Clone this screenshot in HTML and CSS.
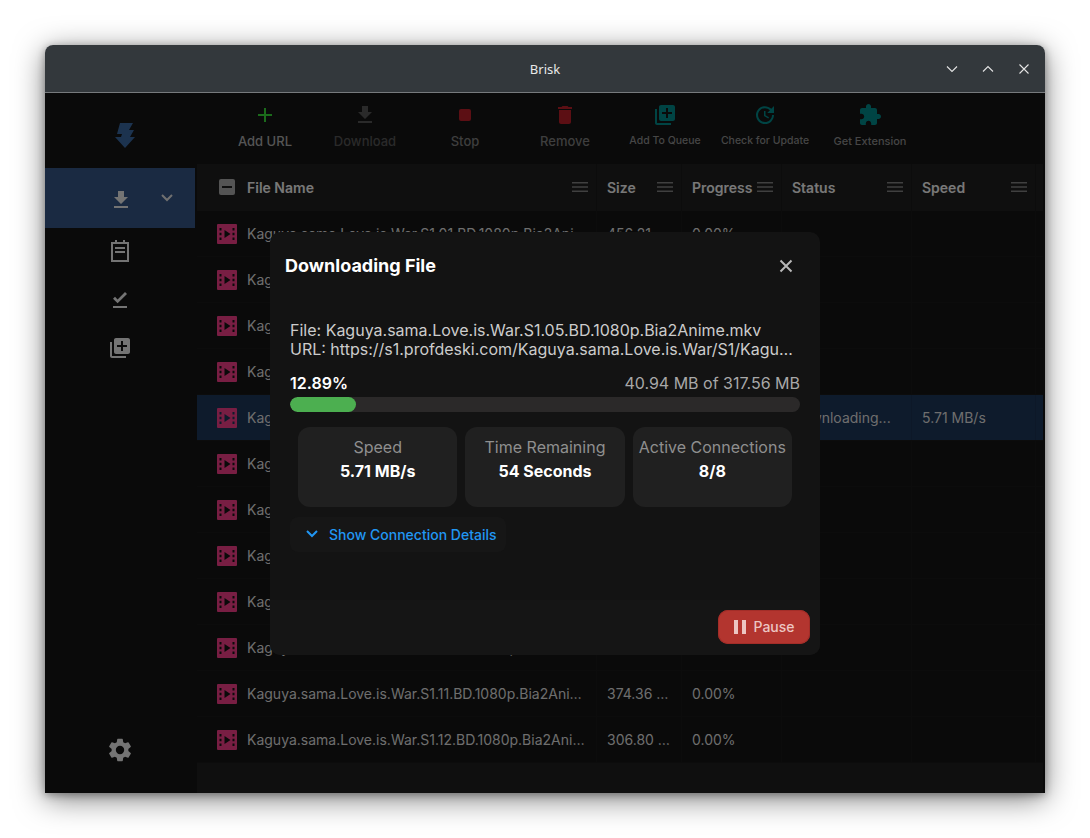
FILE: index.html

```html
<!DOCTYPE html>
<html lang="en">
<head>
    <meta charset="UTF-8">
    <meta name="viewport" content="width=device-width, initial-scale=1.0">
    <title>Brisk</title>
    <link rel="stylesheet" href="styles.css">
</head>
<body>
    <svg class="defs" width="0" height="0">
        <symbol id="i-download" viewBox="0 0 24 24"><path d="M19 9h-4V3H9v6H5l7 7 7-7zM5 18v2h14v-2H5z"/></symbol>
        <symbol id="i-queue" viewBox="0 0 24 24"><path d="M4 6H2v14c0 1.1.9 2 2 2h14v-2H4V6zm16-4H8c-1.1 0-2 .9-2 2v12c0 1.1.9 2 2 2h12c1.1 0 2-.9 2-2V4c0-1.1-.9-2-2-2zm-1 9h-4v4h-2v-4H9V9h4V5h2v4h4v2z"/></symbol>
        <symbol id="i-film" viewBox="0 0 20 20"><path fill-rule="evenodd" d="M1 0h18a1 1 0 0 1 1 1v18a1 1 0 0 1-1 1H1a1 1 0 0 1-1-1V1a1 1 0 0 1 1-1zM2.500 4v2.500h2V4zm0 4.800v2.400h2V8.800zm0 4.700V16h2v-2.500zM15.500 4v2.500h2V4zm0 4.800v2.400h2V8.800zm0 4.700V16h2v-2.500zM7.500 6v8l6-4z"/></symbol>
        <symbol id="i-menu" viewBox="0 0 16 10"><path d="M0 0h16v1.600H0zM0 4.200h16v1.600H0zM0 8.400h16V10H0z"/></symbol>
    </svg>

    <div class="window">
        <div class="titlebar">
            <span class="titlebar-name">Brisk</span>
            <div class="titlebar-btns">
                <svg viewBox="0 0 12 12"><path d="M1 3.500l5 5 5-5"/></svg>
                <svg viewBox="0 0 12 12"><path d="M1 8.500l5-5 5 5"/></svg>
                <svg viewBox="0 0 12 12"><path d="M1.500 1.500l9 9M10.500 1.500l-9 9"/></svg>
            </div>
        </div>

        <div class="content">
            <div class="sidebar">
                <div class="logo">
                    <svg viewBox="0 0 20 25"><path d="M5 0h13l-4 7h5l-4 7h5l-10 11L0 14h6l1-3H2z"/></svg>
                </div>
                <div class="side-item active">
                    <svg class="side-icon"><use href="#i-download"/></svg>
                    <svg class="side-chevron" viewBox="0 0 12 8"><path d="M1 1l5 5 5-5"/></svg>
                </div>
                <div class="side-item">
                    <svg class="side-icon" viewBox="0 0 24 24"><path fill-rule="evenodd" d="M3 2h18v20H3zM5 4v16h14V4zM7 0h2v2H7zM15 0h2v2h-2zM7 7h10v2H7zM7 11h10v2H7z"/></svg>
                </div>
                <div class="side-item">
                    <svg class="side-icon" viewBox="0 0 24 24"><path d="M5 18h14v2H5v-2zm4.600-2.700L5 10.700l2-1.900 2.600 2.600L17 4l2 2-9.400 9.300z"/></svg>
                </div>
                <div class="side-item">
                    <svg class="side-icon"><use href="#i-queue"/></svg>
                </div>
                <div class="side-item settings">
                    <svg class="gear" viewBox="0 0 24 24"><path d="M19.140 12.940c.04-.3.060-.61.060-.94 0-.32-.02-.64-.07-.94l2.030-1.580a.49.490 0 0 0 .12-.61l-1.920-3.320a.49.490 0 0 0-.59-.22l-2.390.96c-.5-.38-1.030-.7-1.620-.94l-.36-2.540a.48.480 0 0 0-.48-.41h-3.840a.47.470 0 0 0-.47.410l-.36 2.540c-.59.240-1.130.57-1.620.94l-2.390-.96a.48.480 0 0 0-.59.220L2.740 8.870a.47.470 0 0 0 .12.61l2.030 1.580c-.05.3-.09.63-.09.94s.02.640.07.94l-2.030 1.580a.49.490 0 0 0-.12.610l1.920 3.320c.12.220.37.290.59.220l2.390-.96c.5.380 1.030.7 1.620.94l.36 2.540c.05.240.24.410.48.410h3.840c.24 0 .44-.17.47-.41l.36-2.540c.59-.24 1.130-.56 1.620-.94l2.390.96c.22.080.47 0 .59-.22l1.920-3.320a.47.470 0 0 0-.12-.61l-2.010-1.580zM12 15.600A3.610 3.610 0 0 1 8.400 12 3.610 3.610 0 0 1 12 8.400a3.610 3.610 0 0 1 3.600 3.600 3.610 3.610 0 0 1-3.600 3.600z"/></svg>
                </div>
            </div>

            <div class="main">
                <div class="toolbar">
                    <div class="tool">
                        <svg class="tool-icon green" viewBox="0 0 24 24"><path d="M19 13h-6v6h-2v-6H5v-2h6V5h2v6h6v2z"/></svg>
                        <span>Add URL</span>
                    </div>
                    <div class="tool off">
                        <svg class="tool-icon grey"><use href="#i-download"/></svg>
                        <span>Download</span>
                    </div>
                    <div class="tool dim">
                        <svg class="tool-icon red" viewBox="0 0 24 24"><rect x="6" y="6" width="12" height="12" rx="2"/></svg>
                        <span>Stop</span>
                    </div>
                    <div class="tool dim">
                        <svg class="tool-icon red" viewBox="0 0 24 24"><path d="M6 19c0 1.100.9 2 2 2h8c1.100 0 2-.9 2-2V7H6v12zM19 4h-3.500l-1-1h-5l-1 1H5v2h14V4z"/></svg>
                        <span>Remove</span>
                    </div>
                    <div class="tool small">
                        <svg class="tool-icon teal"><use href="#i-queue"/></svg>
                        <span>Add To Queue</span>
                    </div>
                    <div class="tool small">
                        <svg class="tool-icon teal" viewBox="0 0 24 24"><path d="M21 10.120h-6.780l2.740-2.820c-2.730-2.700-7.150-2.800-9.880-.1-2.730 2.710-2.730 7.080 0 9.790s7.150 2.710 9.880 0C18.320 15.650 19 14.080 19 12.100h2c0 1.980-.88 4.550-2.640 6.290-3.510 3.480-9.210 3.480-12.720 0-3.500-3.470-3.530-9.110-.02-12.580s9.140-3.470 12.650 0L21 3v7.120zM12.500 8v4.250l3.500 2.080-.72 1.210L11 13V8h1.500z"/></svg>
                        <span>Check for Update</span>
                    </div>
                    <div class="tool small wide">
                        <svg class="tool-icon teal" viewBox="0 0 24 24"><path d="M20.500 11H19V7c0-1.100-.9-2-2-2h-4V3.500C13 2.120 11.880 1 10.500 1S8 2.120 8 3.500V5H4c-1.100 0-1.990.9-1.990 2v3.800H3.500c1.490 0 2.700 1.210 2.700 2.700s-1.210 2.700-2.700 2.700H2V20c0 1.100.9 2 2 2h3.800v-1.500c0-1.490 1.210-2.700 2.700-2.700 1.490 0 2.700 1.210 2.700 2.700V22H17c1.100 0 2-.9 2-2v-4h1.500c1.380 0 2.500-1.120 2.500-2.500S21.880 11 20.500 11z"/></svg>
                        <span>Get Extension</span>
                    </div>
                </div>

                <div class="grid">
                    <div class="row head">
                        <div class="cell first"><span class="check"></span><span class="head-name">File Name</span><svg class="menu"><use href="#i-menu"/></svg></div>
                        <div class="cell"><span class="head-name">Size</span><svg class="menu"><use href="#i-menu"/></svg></div>
                        <div class="cell"><span class="head-name">Progress</span><svg class="menu"><use href="#i-menu"/></svg></div>
                        <div class="cell"><span class="head-name">Status</span><svg class="menu"><use href="#i-menu"/></svg></div>
                        <div class="cell"><span class="head-name">Speed</span><svg class="menu"><use href="#i-menu"/></svg></div>
                    </div>
                    <div class="row"><div class="cell first"><svg class="film"><use href="#i-film"/></svg><span class="name">Kaguya.sama.Love.is.War.S1.01.BD.1080p.Bia2Anime.mkv</span></div><div class="cell"><span class="name">456.21 MB</span></div><div class="cell">0.00%</div><div class="cell"></div><div class="cell"></div></div>
                    <div class="row"><div class="cell first"><svg class="film"><use href="#i-film"/></svg><span class="name">Kaguya.sama.Love.is.War.S1.02.BD.1080p.Bia2Anime.mkv</span></div><div class="cell"><span class="name">312.40 MB</span></div><div class="cell">0.00%</div><div class="cell"></div><div class="cell"></div></div>
                    <div class="row"><div class="cell first"><svg class="film"><use href="#i-film"/></svg><span class="name">Kaguya.sama.Love.is.War.S1.03.BD.1080p.Bia2Anime.mkv</span></div><div class="cell"><span class="name">340.12 MB</span></div><div class="cell">0.00%</div><div class="cell"></div><div class="cell"></div></div>
                    <div class="row"><div class="cell first"><svg class="film"><use href="#i-film"/></svg><span class="name">Kaguya.sama.Love.is.War.S1.04.BD.1080p.Bia2Anime.mkv</span></div><div class="cell"><span class="name">298.77 MB</span></div><div class="cell">0.00%</div><div class="cell"></div><div class="cell"></div></div>
                    <div class="row selected"><div class="cell first"><svg class="film"><use href="#i-film"/></svg><span class="name">Kaguya.sama.Love.is.War.S1.05.BD.1080p.Bia2Anime.mkv</span></div><div class="cell"><span class="name">317.56 MB</span></div><div class="cell">12.89%</div><div class="cell"><span class="name">Downloading...</span></div><div class="cell">5.71 MB/s</div></div>
                    <div class="row"><div class="cell first"><svg class="film"><use href="#i-film"/></svg><span class="name">Kaguya.sama.Love.is.War.S1.06.BD.1080p.Bia2Anime.mkv</span></div><div class="cell"><span class="name">325.09 MB</span></div><div class="cell">0.00%</div><div class="cell"></div><div class="cell"></div></div>
                    <div class="row"><div class="cell first"><svg class="film"><use href="#i-film"/></svg><span class="name">Kaguya.sama.Love.is.War.S1.07.BD.1080p.Bia2Anime.mkv</span></div><div class="cell"><span class="name">301.33 MB</span></div><div class="cell">0.00%</div><div class="cell"></div><div class="cell"></div></div>
                    <div class="row"><div class="cell first"><svg class="film"><use href="#i-film"/></svg><span class="name">Kaguya.sama.Love.is.War.S1.08.BD.1080p.Bia2Anime.mkv</span></div><div class="cell"><span class="name">288.64 MB</span></div><div class="cell">0.00%</div><div class="cell"></div><div class="cell"></div></div>
                    <div class="row"><div class="cell first"><svg class="film"><use href="#i-film"/></svg><span class="name">Kaguya.sama.Love.is.War.S1.09.BD.1080p.Bia2Anime.mkv</span></div><div class="cell"><span class="name">350.18 MB</span></div><div class="cell">0.00%</div><div class="cell"></div><div class="cell"></div></div>
                    <div class="row"><div class="cell first"><svg class="film"><use href="#i-film"/></svg><span class="name">Kaguya.sama.Love.is.War.S1.10.BD.1080p.Bia2Anime.mkv</span></div><div class="cell"><span class="name">333.50 MB</span></div><div class="cell">0.00%</div><div class="cell"></div><div class="cell"></div></div>
                    <div class="row"><div class="cell first"><svg class="film"><use href="#i-film"/></svg><span class="name">Kaguya.sama.Love.is.War.S1.11.BD.1080p.Bia2Anime.mkv</span></div><div class="cell"><span class="name">374.36 MB</span></div><div class="cell">0.00%</div><div class="cell"></div><div class="cell"></div></div>
                    <div class="row"><div class="cell first"><svg class="film"><use href="#i-film"/></svg><span class="name">Kaguya.sama.Love.is.War.S1.12.BD.1080p.Bia2Anime.mkv</span></div><div class="cell"><span class="name">306.80 MB</span></div><div class="cell">0.00%</div><div class="cell"></div><div class="cell"></div></div>
                </div>
            </div>

            <div class="overlay">
                <div class="modal">
                    <div class="modal-head">
                        <span class="modal-title">Downloading File</span>
                        <svg class="modal-close" viewBox="0 0 14 14"><path d="M1.500 1.500l11 11M12.500 1.500l-11 11"/></svg>
                    </div>
                    <div class="modal-body">
                        <div class="file-info">
                            <div class="file-line">File: Kaguya.sama.Love.is.War.S1.05.BD.1080p.Bia2Anime.mkv</div>
                            <div class="file-line">URL: https://s1.profdeski.com/Kaguya.sama.Love.is.War/S1/Kaguya.sama.Love.is.War.S1.05.BD.1080p.Bia2Anime.mkv</div>
                        </div>
                        <div class="progress-text">
                            <span class="percent">12.89%</span>
                            <span class="amount">40.94 MB of 317.56 MB</span>
                        </div>
                        <div class="bar"><div class="bar-fill" style="width: 12.89%"></div></div>
                        <div class="stats">
                            <div class="stat"><span class="stat-label">Speed</span><span class="stat-value">5.71 MB/s</span></div>
                            <div class="stat"><span class="stat-label">Time Remaining</span><span class="stat-value">54 Seconds</span></div>
                            <div class="stat"><span class="stat-label">Active Connections</span><span class="stat-value">8/8</span></div>
                        </div>
                        <button class="details-btn">
                            <svg viewBox="0 0 12 8"><path d="M1 1l5 5 5-5"/></svg>
                            Show Connection Details
                        </button>
                    </div>
                    <div class="modal-foot">
                        <button class="pause-btn">
                            <svg viewBox="0 0 14 14"><path d="M1 0h4v14H1zM9 0h4v14H9z"/></svg>
                            Pause
                        </button>
                    </div>
                </div>
            </div>
        </div>
    </div>
</body>
</html>
```

FILE: styles.css

```css
* {
    box-sizing: border-box;
}
body {
    font-family: Inter, "Liberation Sans", sans-serif;
    margin: 0;
    padding: 45px;
    background-color: #ffffff;
}
button {
    font-family: inherit;
    border: none;
    cursor: pointer;
}
.defs {
    display: block;
    height: 0;
}
.window {
    width: 1000px;
    height: 748px;
    display: flex;
    flex-direction: column;
    border-radius: 8px 8px 0 0;
    overflow: hidden;
    box-shadow: 0 6px 30px rgba(0, 0, 0, 0.5), 0 2px 8px rgba(0, 0, 0, 0.35);
}

/* title bar */
.titlebar {
    height: 48px;
    flex-shrink: 0;
    display: flex;
    align-items: center;
    justify-content: flex-end;
    padding-right: 15px;
    background-color: #33383c;
    border-bottom: 1px solid #777a7d;
    position: relative;
}
.titlebar-name {
    position: absolute;
    left: 0;
    right: 0;
    text-align: center;
    font-family: "Noto Sans", sans-serif;
    font-size: 13px;
    color: #e8e8e8;
}
.titlebar-btns {
    display: flex;
    gap: 24px;
}
.titlebar-btns svg {
    width: 12px;
    height: 12px;
    fill: none;
    stroke: #e4e4e4;
    stroke-width: 1.1;
}

.content {
    flex: 1;
    display: flex;
    position: relative;
    min-height: 0;
    background-color: #141414;
}

/* sidebar */
.sidebar {
    width: 150px;
    flex-shrink: 0;
    display: flex;
    flex-direction: column;
}
.logo {
    height: 75px;
    display: flex;
    align-items: center;
    justify-content: center;
    padding: 10px 0 0 10px;
}
.logo svg {
    width: 20px;
    height: 25px;
    fill: #38669f;
}
.side-item {
    height: 48px;
    display: flex;
    align-items: center;
    padding-left: 63px;
    gap: 23px;
}
.side-item.active {
    height: 60px;
    background-color: #345484;
    padding-left: 64px;
    gap: 25px;
}
.side-item.active .side-icon {
    margin-top: 3px;
}
.side-item.settings {
    margin-top: auto;
    margin-bottom: 19px;
    padding-left: 61px;
}
.side-icon {
    width: 24px;
    height: 24px;
    fill: #e8e8e8;
}
.gear {
    width: 28px;
    height: 28px;
    fill: #e8e8e8;
}
.side-chevron {
    width: 12px;
    height: 8px;
    margin-left: 3px;
    fill: none;
    stroke: #e0e0e0;
    stroke-width: 2;
}

/* toolbar */
.main {
    flex: 1;
    min-width: 0;
    display: flex;
    flex-direction: column;
}
.toolbar {
    height: 71px;
    flex-shrink: 0;
    display: flex;
    padding-left: 20px;
}
.tool {
    width: 100px;
    display: flex;
    flex-direction: column;
    align-items: center;
    padding-top: 10px;
    gap: 6px;
    font-size: 13px;
    font-weight: 500;
    color: #aaaaaa;
}
.tool.dim {
    color: #7c7c7c;
}
.tool.off {
    color: #555555;
}
.tool.small {
    font-size: 10.500px;
    color: #8c8c8c;
}
.tool.wide {
    width: 110px;
    font-size: 11px;
    gap: 6px;
}
.tool span {
    line-height: 16px;
}
.tool-icon {
    width: 24px;
    height: 24px;
}
.green { fill: #36d636; }
.grey { fill: #555555; }
.red { fill: #b81e28; }
.teal { fill: #008888; }

/* file table */
.grid {
    flex: 1;
    margin: 0 2px;
    background-color: #1e1e1e;
    display: flex;
    flex-direction: column;
}
.row {
    height: 46px;
    flex-shrink: 0;
    display: grid;
    grid-template-columns: 400px 85px 100px 130px 124px;
    background-color: #141414;
    border-bottom: 1px solid #191919;
    font-size: 14px;
    color: #dcdcdc;
}
.row.head {
    height: 47px;
    background-color: #1e1e1e;
    border-bottom: none;
}
.row.selected {
    background-color: #1c3658;
}
.cell {
    display: flex;
    align-items: center;
    padding: 0 8px 0 10px;
    min-width: 0;
    border-right: 1px solid #191919;
}
.selected .cell {
    border-right-color: #1a3150;
}
.cell.first {
    padding-left: 20px;
    gap: 10px;
}
.head .cell {
    justify-content: space-between;
    padding-bottom: 1px;
}
.head .first {
    justify-content: flex-start;
}
.head .menu {
    margin-left: auto;
}
.head-name {
    font-weight: 600;
    color: #f0f0f0;
}
.check {
    width: 16px;
    height: 16px;
    margin: 0 2px;
    border-radius: 2px;
    background: linear-gradient(#1e1e1e, #1e1e1e) center / 10px 2px no-repeat #a8a8a8;
}
.menu {
    width: 16px;
    height: 10px;
    flex-shrink: 0;
    fill: #808080;
}
.film {
    width: 20px;
    height: 20px;
    flex-shrink: 0;
    fill: #f03c86;
}
.name {
    white-space: nowrap;
    overflow: hidden;
    text-overflow: ellipsis;
}

/* dialog */
.overlay {
    position: absolute;
    inset: 0;
    display: flex;
    align-items: center;
    justify-content: center;
    background-color: rgba(0, 0, 0, 0.5);
}
.modal {
    width: 550px;
    height: 423px;
    display: flex;
    flex-direction: column;
    border-radius: 10px;
    background-color: #131313;
}
.modal-head {
    height: 66px;
    flex-shrink: 0;
    display: flex;
    align-items: center;
    justify-content: space-between;
    padding: 2px 27px 0 15px;
}
.modal-title {
    font-size: 18px;
    font-weight: 700;
    color: #ffffff;
}
.modal-close {
    width: 14px;
    height: 14px;
    fill: none;
    stroke: #b8b8b8;
    stroke-width: 2;
}
.modal-body {
    flex: 1;
    min-height: 0;
    padding: 23px 20px 0;
}
.file-line {
    font-size: 16px;
    line-height: 19px;
    color: #cccccc;
    white-space: nowrap;
    overflow: hidden;
    text-overflow: ellipsis;
}
.progress-text {
    display: flex;
    justify-content: space-between;
    margin-top: 15px;
    font-size: 16px;
    line-height: 19px;
}
.percent {
    font-weight: 600;
    color: #ffffff;
}
.amount {
    color: #a8a8a8;
}
.bar {
    height: 15px;
    margin-top: 4px;
    border-radius: 8px;
    background-color: #2b2929;
    overflow: hidden;
}
.bar-fill {
    height: 100%;
    border-radius: 8px;
    background-color: #4caf50;
}
.stats {
    display: flex;
    gap: 8px;
    margin: 15px 8px 0;
}
.stat {
    flex: 1;
    height: 80px;
    display: flex;
    flex-direction: column;
    align-items: center;
    padding-top: 10px;
    gap: 4px;
    border-radius: 12px;
    background-color: #202020;
    line-height: 20px;
    font-size: 16px;
}
.stat-label {
    color: #8f8f8f;
    white-space: nowrap;
}
.stat-value {
    font-weight: 700;
    color: #ffffff;
}
.details-btn {
    display: flex;
    align-items: center;
    gap: 11px;
    height: 35px;
    margin-top: 10px;
    padding: 0 9px 0 16px;
    border-radius: 8px;
    background-color: #161616;
    font-size: 14px;
    font-weight: 500;
    color: #2196f3;
}
.details-btn svg {
    width: 12px;
    height: 8px;
    fill: none;
    stroke: #2196f3;
    stroke-width: 2;
}
.modal-foot {
    height: 55px;
    flex-shrink: 0;
    display: flex;
    justify-content: flex-end;
    padding: 10px 10px 0;
    border-radius: 0 0 10px 10px;
    background-color: #151515;
}
.pause-btn {
    width: 92px;
    height: 34px;
    display: flex;
    align-items: center;
    justify-content: center;
    gap: 6px;
    padding: 0;
    border-radius: 10px;
    background-color: #b3352f;
    box-shadow: inset 0 0 0 1px #a32d28;
    font-size: 14px;
    font-weight: 500;
    color: #ecc6c3;
}
.pause-btn svg {
    width: 14px;
    height: 14px;
    fill: #ecc6c3;
}
```
